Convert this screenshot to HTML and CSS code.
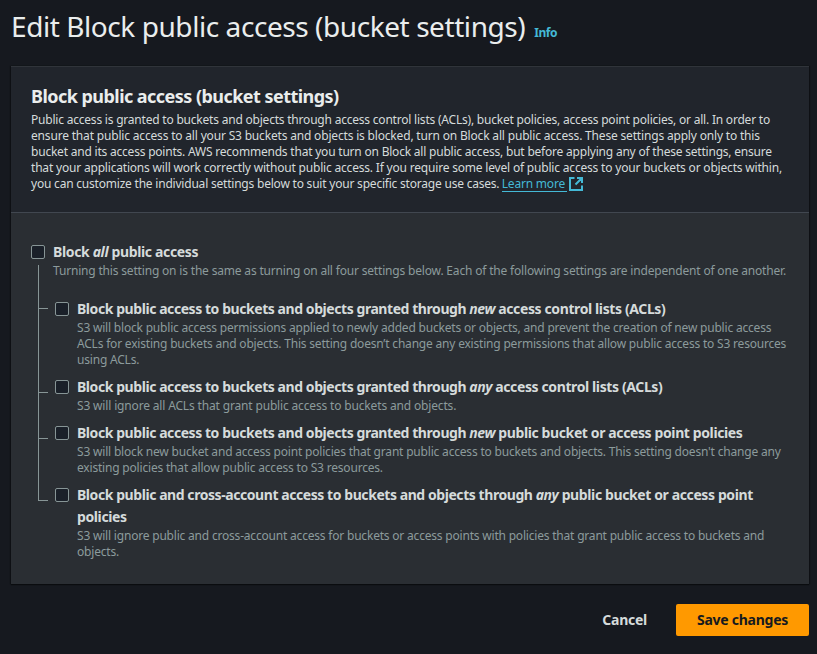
FILE: index.html
```html
<!DOCTYPE html>
<html lang="en">
<head>
<meta charset="utf-8">
<title>Edit Block public access</title>
<link rel="stylesheet" href="styles.css">
</head>
<body>
<main class="page">
  <header class="page-header">
    <h1>Edit Block public access (bucket settings)</h1>
    <a class="info">Info</a>
  </header>
  <section class="panel">
    <div class="panel-header">
      <h2>Block public access (bucket settings)</h2>
      <p class="intro">Public access is granted to buckets and objects through access control lists (ACLs), bucket policies, access point policies, or all. In order to<br><span class="loose">ensure that public access to all your S3 buckets and objects is blocked, turn on Block all public access. These settings apply only to this</span><br>bucket and its access points. AWS recommends that you turn on Block all public access, but before applying any of these settings, ensure<br><span class="medium">that your applications will work correctly without public access. If you require some level of public access to your buckets or objects within,</span><br>you can customize the individual settings below to suit your specific storage use cases. <a class="learn">Learn more <svg class="external" viewBox="0 0 14 14"><path d="M5.500 1H1v12h12V8.500M8 1h5v5M13 1 6.500 7.500"/></svg></a></p>
    </div>
    <div class="panel-body">
      <div class="option">
        <span class="box"></span>
        <div>
          <h3 class="root-title">Block <em>all</em> public access</h3>
          <p class="hint loose">Turning this setting on is the same as turning on all four settings below. Each of the following settings are independent of one another.</p>
        </div>
      </div>
      <div class="tree">
        <div class="option branch first">
          <span class="box"></span>
          <div>
            <h3>Block public access to buckets and objects granted through <em>new</em> <span class="tail">access control lists (ACLs)</span></h3>
            <p class="hint">S3 will block public access permissions applied to newly added buckets or objects, and prevent the creation of new public access<br>ACLs for existing buckets and objects. This setting doesn’t change any existing permissions that allow public access to S3 resources<br>using ACLs.</p>
          </div>
        </div>
        <div class="option branch">
          <span class="box"></span>
          <div>
            <h3>Block public access to buckets and objects granted through <em>any</em> <span class="tail">access control lists (ACLs)</span></h3>
            <p class="hint short">S3 will ignore all ACLs that grant public access to buckets and objects.</p>
          </div>
        </div>
        <div class="option branch">
          <span class="box"></span>
          <div>
            <h3>Block public access to buckets and objects granted through <em>new</em> <span class="tail">public bucket or access point policies</span></h3>
            <p class="hint medium">S3 will block new bucket and access point policies that grant public access to buckets and objects. This setting doesn't change any<br>existing policies that allow public access to S3 resources.</p>
          </div>
        </div>
        <div class="option branch last">
          <span class="box"></span>
          <div>
            <h3>Block public and cross-account access to buckets and objects through <em>any</em> <span class="tail">public bucket or access point<br>policies</span></h3>
            <p class="hint">S3 will ignore public and cross-account access for buckets or access points with policies that grant public access to buckets and<br>objects.</p>
          </div>
        </div>
      </div>
    </div>
  </section>
  <footer class="actions">
    <button class="btn">Cancel</button>
    <button class="btn primary">Save changes</button>
  </footer>
</main>
</body>
</html>
```
FILE: styles.css
```css
* { box-sizing: border-box; }
body {
  margin: 0;
  background: #16191f;
  color: #d5dbdb;
  font: 12px/16px "Noto Sans", sans-serif;
  overflow: hidden;
}
h1, h2, h3, p { margin: 0; }
.page { padding: 8px 8px 0 11px; }
.page-header {
  display: flex;
  align-items: baseline;
  gap: 9px;
  height: 58px;
  white-space: nowrap;
}
h1 {
  font-size: 28px;
  line-height: 36px;
  font-weight: 400;
  letter-spacing: -0.43px;
  color: #eaeded;
}
.info {
  font-weight: 700;
  letter-spacing: -0.5px;
  color: #44b9d6;
}
.panel {
  height: 518px;
  background: #2a2e33;
  box-shadow: 0 1px 1px #0a0c0f, 1px 0 1px #101216, -1px 0 1px #101216;
  white-space: nowrap;
}
.panel-header {
  height: 147px;
  padding: 18px 20px 0;
  background: #21252c;
  border-top: 1px solid #30343a;
  border-bottom: 1px solid #414750;
}
h2 {
  font-size: 18px;
  line-height: 22px;
  font-weight: 700;
  letter-spacing: -0.54px;
  color: #eaeded;
}
.intro { margin-top: 5px; letter-spacing: -0.21px; }
.learn {
  display: inline-block;
  position: relative;
  left: -0.5px;
  color: #44b9d6;
  width: 81px;
}
.learn::after {
  content: "";
  position: absolute;
  left: 0;
  bottom: 0;
  width: 65px;
  height: 1px;
  background: #44b9d6;
}
.external {
  position: absolute;
  right: 0;
  top: 1px;
  width: 14px;
  height: 14px;
  fill: none;
  stroke: #44b9d6;
  stroke-width: 2;
}
.panel-body { padding: 28px 20px 0; }
.option { display: flex; gap: 8px; }
.box {
  flex: none;
  width: 14px;
  height: 14px;
  margin-top: 4px;
  border: 1px solid #879596;
  border-radius: 2px;
  background: #1a2029;
}
h3 {
  font-size: 14px;
  line-height: 22px;
  font-weight: 700;
  letter-spacing: -0.435px;
  color: #d5dbdb;
}
.root-title { letter-spacing: -0.36px; }
.tail { letter-spacing: -0.385px; }
.hint { color: #8c9b9c; letter-spacing: -0.198px; }
.medium { letter-spacing: -0.19px; }
.loose { letter-spacing: -0.178px; }
.short { letter-spacing: -0.16px; }
.tree {
  position: relative;
  display: grid;
  gap: 8px;
  margin-top: 19px;
  padding-left: 24px;
}
.tree::before {
  content: "";
  position: absolute;
  left: 7px;
  top: -33px;
  height: 236px;
  width: 1px;
  background: #879596;
}
.branch { position: relative; }
.branch::before {
  content: "";
  position: absolute;
  left: -17px;
  top: 16px;
  width: 10px;
  height: 1px;
  background: #879596;
}
.first::before { top: 10px; }
.actions {
  display: flex;
  justify-content: flex-end;
  gap: 8px;
  padding-top: 20px;
}
.btn {
  height: 32px;
  padding: 0 21px;
  border: 0;
  border-radius: 2px;
  background: none;
  color: #d5dbdb;
  font: 700 14px/22px "Noto Sans", sans-serif;
  letter-spacing: -0.25px;
  white-space: nowrap;
}
.primary {
  width: 133px;
  padding: 0;
  background: #ff9900;
  color: #16191f;
}
```
